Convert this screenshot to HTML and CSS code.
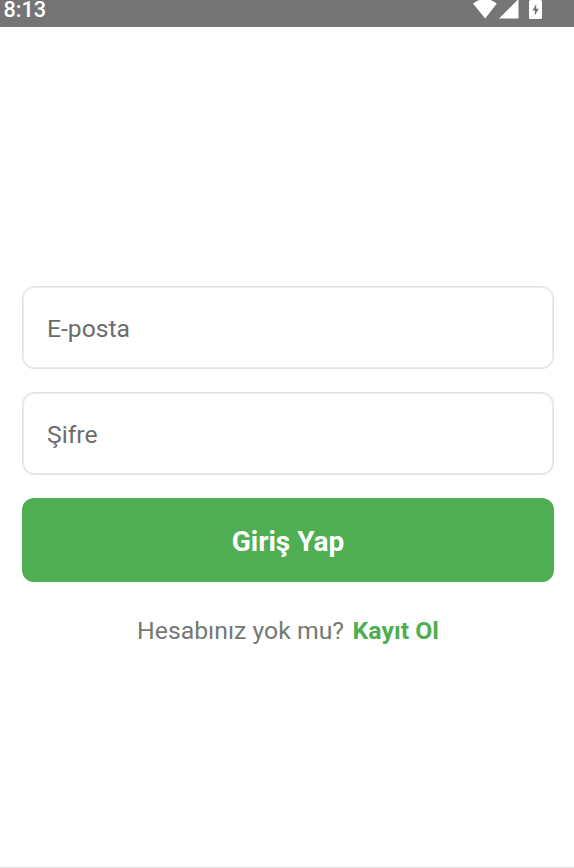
FILE: index.html
```html
<!DOCTYPE html>
<html lang="tr">
<head>
<meta charset="utf-8">
<title>Giriş Yap</title>
<link rel="stylesheet" href="styles.css">
</head>
<body>
<header class="status">
  <span class="clock">8:13</span>
  <svg class="status-icons" viewBox="0 0 72 27" width="72" height="27" aria-hidden="true">
    <path fill="#fff" d="M0 3.500Q12-5.500 23.800 3.500L12.200 18.500Z"/>
    <path fill="#fff" d="M45.500-1V18.500H26Z"/>
    <path fill="#fff" fill-rule="evenodd" d="M57.500 0H59V-2H66V0H67.500Q69 0 69 1.500V17.500Q69 19 67.500 19H57.500Q56 19 56 17.500V1.500Q56 0 57.500 0ZM63.200 4L59.500 10.500H61.800V15.500L65.800 8.700H63.200Z"/>
  </svg>
</header>
<main class="login">
  <form class="form">
    <input class="field" type="email" placeholder="E-posta">
    <input class="field" type="password" placeholder="Şifre">
    <button class="submit" type="button">Giriş Yap</button>
  </form>
  <p class="signup"><span>Hesabınız yok mu?</span><a class="link">Kayıt Ol</a></p>
</main>
</body>
</html>
```
FILE: styles.css
```css
* {
  box-sizing: border-box;
}

body {
  display: flex;
  flex-direction: column;
  height: 868px;
  margin: 0;
  overflow: hidden;
  background: #fff;
  font-family: Roboto, sans-serif;
}

.status {
  display: flex;
  justify-content: space-between;
  height: 27px;
  padding: 0 29px 0 3.5px;
  background: #757575;
  color: #fff;
}

.clock {
  font-size: 21.7px;
  font-weight: 500;
  line-height: 20px;
}

.login {
  flex: 1;
  padding: 259px 20px 0 22px;
  border-bottom: 1px solid #dcdfde;
}

.form {
  display: flex;
  flex-direction: column;
}

.field {
  height: 83px;
  margin: 0 0 23px;
  padding: 2px 24px 0;
  border: 1px solid #e2e2e2;
  border-radius: 12px;
  box-shadow: inset 0 0 0 1px #ebebeb;
  background: #fff;
  font: 400 24.7px Roboto, sans-serif;
}

.field::placeholder {
  color: #6b6d6b;
  opacity: 1;
}

.submit {
  height: 84px;
  padding: 3px 0 0;
  border: 0;
  border-radius: 12px;
  background: #4fae52;
  color: #fff;
  font: 700 28px Roboto, sans-serif;
}

.signup {
  display: flex;
  justify-content: center;
  gap: 8.5px;
  margin: 34px 0 0;
  color: #757975;
  font-size: 24.8px;
  line-height: 30px;
}

.link {
  color: #4fae52;
  font-weight: 700;
}
```
